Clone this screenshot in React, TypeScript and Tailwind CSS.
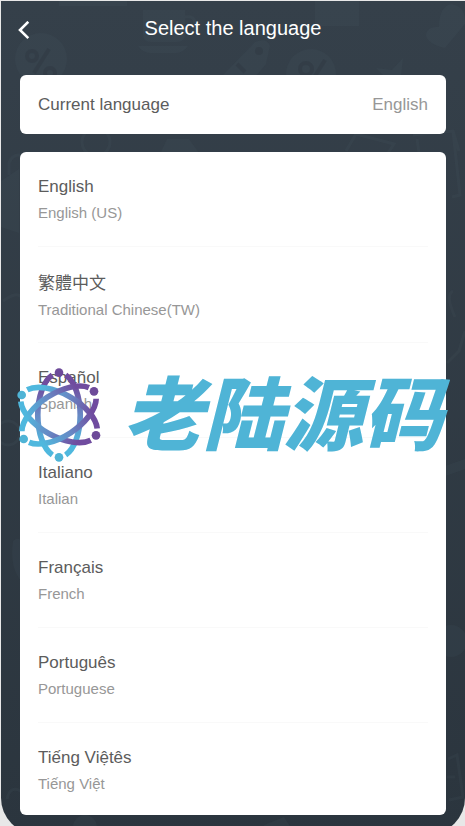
import { useState } from 'react';

type Language = {
  name: string;
  label: string;
  lang: string;
};

const languages: Language[] = [
  { name: 'English', label: 'English (US)', lang: 'en' },
  { name: '繁體中文', label: 'Traditional Chinese(TW)', lang: 'zh-TW' },
  { name: 'Español', label: 'Spanish', lang: 'es' },
  { name: 'Italiano', label: 'Italian', lang: 'it' },
  { name: 'Français', label: 'French', lang: 'fr' },
  { name: 'Português', label: 'Portuguese', lang: 'pt' },
  { name: 'Tiếng Việtês', label: 'Tiếng Việt', lang: 'vi' },
];

export default function App() {
  const [current, setCurrent] = useState('English');

  return (
    <div className="min-h-screen overflow-hidden bg-[#e8e8e8] pl-px pt-px font-['Liberation_Sans','Noto_Sans_CJK_TC',sans-serif]">
      <main className="relative -mb-2 overflow-hidden rounded-b-[36px] bg-linear-to-b from-[#35404a] to-[#2b353e] pb-[19px]">
        <Backdrop />

        {/* Header */}
        <header className="relative grid h-[74px] grid-cols-[48px_1fr_48px] pt-[11px]">
          <button type="button" aria-label="Back" className="flex h-8 items-center pl-4 pt-1">
            <svg width="13" height="19" viewBox="0 0 13 19" fill="none" stroke="white" strokeWidth="2.6">
              <path d="M11.3 0.8 3 9l8.3 8.2" />
            </svg>
          </button>
          <h1 className="text-center text-[20px] leading-8 text-white">Select the language</h1>
        </header>

        <div className="relative flex flex-col gap-[18px] px-[19px]">
          {/* Current language */}
          <section className="flex items-center justify-between rounded-md bg-white px-[18px] py-4 text-[17px] leading-[27px]">
            <span className="text-[#5c5c5c]">Current language</span>
            <span className="text-[#979797]">{current}</span>
          </section>

          {/* Language list */}
          <ul className="rounded-md bg-white px-[18px]">
            {languages.map(({ name, label, lang }) => (
              <li key={lang} className="group border-b border-[#f9f9f9] last:border-0">
                <button
                  type="button"
                  onClick={() => setCurrent(name)}
                  className={`flex w-full flex-col text-left leading-[26px] group-last:pb-[18px] ${
                    lang === 'zh-TW' ? 'pb-[19px] pt-6' : 'pb-5 pt-[22px]'
                  }`}
                >
                  <span lang={lang} className="text-[17px] text-[#5c5c5c]">
                    {name}
                  </span>
                  <span className="text-[15px] text-[#979797]">{label}</span>
                </button>
              </li>
            ))}
          </ul>
        </div>

        <Watermark />
      </main>
    </div>
  );
}

function Watermark() {
  return (
    <div className="pointer-events-none absolute left-[14px] top-[365px] flex items-start gap-5 whitespace-nowrap">
      <AtomLogo />
      <p
        lang="zh-CN"
        className="font-['Noto_Sans_CJK_SC',sans-serif] text-[80px] font-black italic leading-[86px] text-[#4fb4d6]"
      >
        老陆源码
      </p>
    </div>
  );
}

function AtomLogo() {
  const orbit = 'M120 20A127 65 0 0 1-120 20M-120-20A127 65 0 0 1 120-20';

  return (
    <svg width="88" height="98" viewBox="-132 -147 264 294" fill="none" strokeWidth="17">
      <defs>
        <linearGradient id="orbit" gradientUnits="userSpaceOnUse" x1="-125" y1="0" x2="125" y2="0">
          <stop offset="0.15" stopColor="#4fb8de" />
          <stop offset="0.5" stopColor="#6788c4" />
          <stop offset="0.85" stopColor="#704c9f" />
        </linearGradient>
      </defs>
      <g stroke="url(#orbit)">
        <path d={orbit} transform="rotate(-90)" />
        <path d={orbit} transform="rotate(29)" />
        <path d={orbit} transform="rotate(-33)" />
      </g>
      <g fill="#4fb4d6">
        <circle cx="-112" cy="-60" r="13" />
        <circle cx="-106" cy="72" r="13" />
        <circle cx="0" cy="127" r="13" />
      </g>
      <g fill="#6d4a99">
        <circle cx="0" cy="-127" r="13" />
        <circle cx="105" cy="-71" r="13" />
        <circle cx="111" cy="61" r="13" />
      </g>
    </svg>
  );
}

// Faint shopping doodles behind the cards
function Backdrop() {
  return (
    <svg className="absolute left-0 top-0" width="464" height="834" viewBox="0 0 464 834" fill="none" aria-hidden="true">
      <g fill="#5a7078" fillOpacity="0.09">
        <path d="M58 0h68v5H58z" />
        <circle cx="40" cy="58" r="26" />
        <path d="M142 9h42v24q0 8-8 8h-26q-8 0-8-8zM137 45h50q-5 7-12 7h-26q-7 0-12-7z" />
        <path d="M314 0h44v25h-44z" />
        <path d="M222 74l32-33q12-5 15 4l-4 18-10 12z" />
        <circle cx="310" cy="73" r="25" />
        <path d="M444 47q-18-4-19-13 1-9 13-8 0-20 12-23 15 2 14 20z" />
        <path d="M375 67l16 2 11-12-2 18h-17z" />
        <path d="M0 180l18-12v64l-18-6z" />
        <path d="M160 151l6-13h22l10 14z" />
        <path d="M430 470l34-12v10l-28 10z" />
        <circle cx="450" cy="640" r="16" />
        <path d="M12 540q10-8 10 12v30q-14-14-10-42z" />
        <circle cx="84" cy="826" r="12" />
        <path d="M263 824l20-8 12 18h-30z" />
      </g>
      <g stroke="#5a7078" strokeOpacity="0.1" strokeWidth="3">
        <path d="M184 16q10-2 10 7t-10 9" />
        <path d="M8 174v-12q3-9 12-8M2 300q14-10 18-4" />
        <circle cx="95" cy="141" r="14" />
        <path d="M345 150l10-17 38 10-6 9M412 134l40-4 6 20M416 138l2 14M452 130l7 64-8 2" />
        <path d="M446 362l12-12 6-20M454 316q-10-22-2-26" />
        <path d="M447 758l9-4 6 42-14 3M454 776h-8" />
        <circle cx="7" cy="432" r="12" />
        <path d="M6 798q3-14 14-8l4 14" />
      </g>
      <g stroke="#303b45" strokeOpacity="0.6" strokeWidth="4">
        <path d="M48 48 33 72" />
        <circle cx="31" cy="55" r="5" />
        <circle cx="49" cy="72" r="5" />
        <circle cx="305" cy="68" r="6" />
        <path d="M324 59l-10 16" />
        <circle cx="258" cy="50" r="2" />
        <path d="M236 63l8 8" />
      </g>
    </svg>
  );
}
